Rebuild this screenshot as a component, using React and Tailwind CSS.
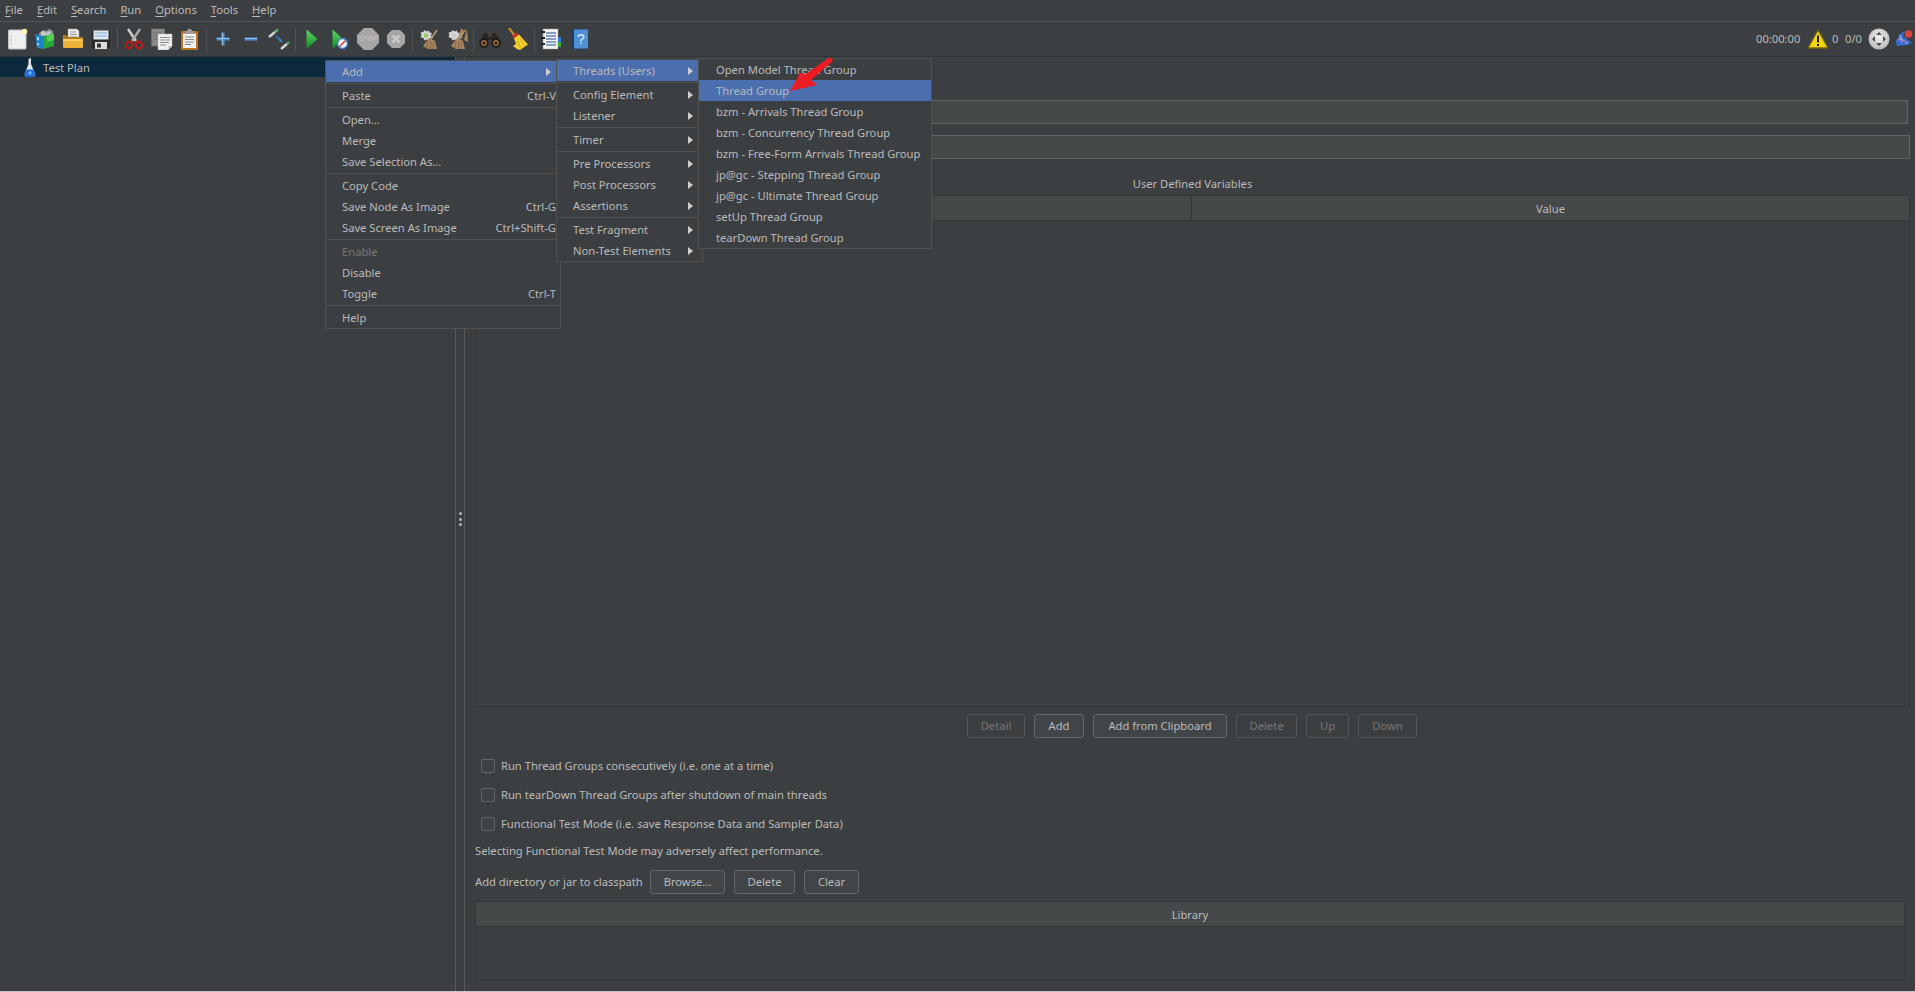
const menuFont = { fontFamily: '"Noto Sans", sans-serif' };

function IconNew() {
  return (
    <svg width="22" height="22" viewBox="0 0 22 22">
      <rect x="2.5" y="2" width="17.5" height="19" rx="1" fill="#efefef" stroke="#c4c4c4" />
      <circle cx="18.5" cy="3.5" r="2.8" fill="#fff3a0" />
      <circle cx="18.5" cy="3.5" r="1.4" fill="#fffde8" />
      <circle cx="5" cy="8" r="0.7" fill="#999" />
      <circle cx="5" cy="12" r="0.7" fill="#999" />
      <circle cx="5" cy="16" r="0.7" fill="#999" />
    </svg>
  );
}

function IconTemplates() {
  return (
    <svg width="22" height="22" viewBox="0 0 22 22">
      <path d="M5 5l4-3 3 1 3-2 4 2v9H5z" fill="#8e9599" />
      <path d="M7 4l3-1 2 2 4-2 1 6H7z" fill="#c3c9cc" />
      <path d="M1 6l8 2v13l-6-1z" fill="#1f7fc9" />
      <path d="M3 9l2 .5v3l-2-.5zM3 15l2 .5v2l-2-.5z" fill="#a9dcf5" />
      <path d="M9 8l11-2v12l-11 3z" fill="#25a83a" />
      <path d="M13 7.500l7-1.500v6l-7 2z" fill="#56d04f" />
    </svg>
  );
}

function IconOpen() {
  return (
    <svg width="22" height="22" viewBox="0 0 22 22">
      <path d="M6 1h9l2 2v9H6z" fill="#e8e8e8" stroke="#aaa" strokeWidth="0.5" />
      <path d="M8 4h6M8 6.500h7M8 9h7" stroke="#999" />
      <path d="M1 7h3l1 2h16v10l-1 1H2l-1-1z" fill="#b07a14" />
      <path d="M1 11h20v8l-1 1H2l-1-1z" fill="#eeb338" />
      <path d="M1 11h20v2H1z" fill="#f8cf68" />
    </svg>
  );
}

function IconSave() {
  return (
    <svg width="22" height="22" viewBox="0 0 22 22">
      <path d="M1 3l1-1h19v18l-1 1H2l-1-1z" fill="#2c2c2c" stroke="#555" strokeWidth="0.5" />
      <rect x="3.500" y="2.500" width="15" height="9" fill="#dce8f3" />
      <path d="M5 5h12M5 8h12" stroke="#7fa7cf" />
      <rect x="5" y="14" width="12" height="7" fill="#dcdcdc" />
      <rect x="7" y="15.500" width="4" height="4" fill="#333" />
    </svg>
  );
}

function IconCut() {
  return (
    <svg width="22" height="22" viewBox="0 0 22 22">
      <path d="M5 1l8 12" stroke="#cfcfcf" strokeWidth="2.400" />
      <path d="M17 1L9 13" stroke="#a8a8a8" strokeWidth="2.400" />
      <circle cx="6" cy="17" r="3.300" fill="none" stroke="#c81818" strokeWidth="1.800" />
      <circle cx="16" cy="17" r="3.300" fill="none" stroke="#c81818" strokeWidth="1.800" />
      <path d="M9 13l-1 2M13 13l1 2" stroke="#c81818" strokeWidth="2" />
    </svg>
  );
}

function IconCopy() {
  return (
    <svg width="22" height="22" viewBox="0 0 22 22">
      <rect x="0.500" y="1" width="13" height="17" fill="#8a8a8a" stroke="#777" strokeWidth="0.5" />
      <path d="M2 5h9M2 8h9M2 11h9" stroke="#6f6f6f" />
      <path d="M7 6h14v12l-4 4H7z" fill="#f0f0f0" stroke="#bbb" strokeWidth="0.5" />
      <path d="M9 9.500h10M9 12h10M9 14.500h9M9 17h6" stroke="#8c8c8c" />
      <path d="M21 18h-4v4z" fill="#c9c9c9" />
    </svg>
  );
}

function IconPaste() {
  return (
    <svg width="22" height="22" viewBox="0 0 22 22">
      <rect x="2" y="3" width="17" height="19" rx="1" fill="#b9731e" />
      <rect x="4" y="5.500" width="13" height="14.500" fill="#f1f1f1" />
      <path d="M6 9h9M6 11.500h9M6 14h9M6 16.500h6" stroke="#888" />
      <path d="M6 3h2l1-2h3l1 2h2v3H6z" fill="#9c9c9c" />
    </svg>
  );
}

function IconPlus() {
  return (
    <svg width="22" height="22" viewBox="0 0 22 22">
      <path d="M4.500 11h13M11 4.500v13" stroke="#4e8ccb" strokeWidth="3.200" />
      <path d="M5 10.500h12M10.500 5v12" stroke="#a9d2f3" strokeWidth="0.8" />
    </svg>
  );
}

function IconMinus() {
  return (
    <svg width="22" height="22" viewBox="0 0 22 22">
      <path d="M4.500 11h13" stroke="#4e8ccb" strokeWidth="3.200" />
      <path d="M5 10.500h12" stroke="#a9d2f3" strokeWidth="0.8" />
    </svg>
  );
}

function IconToggle() {
  return (
    <svg width="22" height="22" viewBox="0 0 22 22">
      <path d="M1 9l6-5" stroke="#cfd6d6" strokeWidth="2.400" />
      <path d="M7 4l3-2.500" stroke="#5fae6e" strokeWidth="2.400" />
      <path d="M8 8l5 5" stroke="#2f7fd8" strokeWidth="1.600" />
      <path d="M14.500 14.500l-1-4-3 3z" fill="#2f7fd8" />
      <path d="M13 21l6-5" stroke="#cfd6d6" strokeWidth="2.400" />
      <path d="M19 16l2-2" stroke="#5fae6e" strokeWidth="2.400" />
    </svg>
  );
}

function IconStart() {
  return (
    <svg width="22" height="22" viewBox="0 0 22 22">
      <defs>
        <linearGradient id="startFill" x1="0" y1="0" x2="0" y2="1">
          <stop offset="0" stopColor="#66d66a" />
          <stop offset="1" stopColor="#088a20" />
        </linearGradient>
      </defs>
      <path d="M5.500 1.500L16.500 11 5.500 21z" fill="url(#startFill)" />
    </svg>
  );
}

function IconStartNoTimers() {
  return (
    <svg width="22" height="22" viewBox="0 0 22 22">
      <defs>
        <linearGradient id="startFill2" x1="0" y1="0" x2="0" y2="1">
          <stop offset="0" stopColor="#66d66a" />
          <stop offset="1" stopColor="#088a20" />
        </linearGradient>
      </defs>
      <path d="M3.500 1.500L14 11 3.500 21z" fill="url(#startFill2)" />
      <circle cx="13.500" cy="15.500" r="5" fill="#f2f6fb" stroke="#3f7fd0" strokeWidth="1.500" />
      <path d="M10.500 18.500l6-6" stroke="#d22a2a" strokeWidth="1.300" />
    </svg>
  );
}

function IconStop() {
  return (
    <svg width="22" height="22" viewBox="0 0 22 22">
      <path d="M7 0h8l7 7v8l-7 7H7l-7-7V7z" fill="#a6a6a6" />
      <text x="11" y="13.300" textAnchor="middle" fontSize="6.500" fontWeight="700" fill="#bdbdbd" fontFamily="Liberation Sans, sans-serif">STOP</text>
    </svg>
  );
}

function IconShutdown() {
  return (
    <svg width="22" height="22" viewBox="0 0 22 22">
      <path d="M7 2h8l5 5v8l-5 5H7l-5-5V7z" fill="#a6a6a6" />
      <path d="M7.500 7.500l7 7M14.500 7.500l-7 7" stroke="#c8c8c8" strokeWidth="2.600" />
    </svg>
  );
}

function IconClear({ double }) {
  return (
    <svg width="22" height="22" viewBox="0 0 22 22">
      <path d="M7 2l1.500 1.500L11 2.500l.5 2L14 5l-1 2.500 1 2-2.500.8-.5 2.200-2.500-1-2 1-1-2.300L2.500 9l1-2-1-2.500 2.500-.5z" fill="#d6d6d6" />
      <circle cx="8" cy="7.500" r="2.200" fill={double ? "#c9c9c9" : "#8fd14f"} />
      {double && <path d="M15 1l-3 9 4 1 1-10z" fill="#a88660" />}
      <path d="M19 2l-6 9" stroke="#b89a72" strokeWidth="1.600" />
      <path d="M11 10l6 3 2 8-9 0-5-3z" fill="#a88660" />
      <path d="M10 13l-1 7M13 13l-1 8M15.500 14l-.5 7" stroke="#7a5c3a" strokeWidth="0.7" />
      {double && <path d="M21 1l-3 11 4 2z" fill="#a88660" />}
    </svg>
  );
}

function IconBinoculars() {
  return (
    <svg width="22" height="22" viewBox="0 0 22 22">
      <path d="M5 5h4v4h4V5h4l2 4 3 6H13v-3H9v3H0l3-6z" fill="#2b2622" />
      <circle cx="5" cy="15" r="4.800" fill="#1c1916" />
      <circle cx="17" cy="15" r="4.800" fill="#1c1916" />
      <circle cx="5" cy="15" r="3" fill="#9a6d3e" />
      <circle cx="17" cy="15" r="3" fill="#9a6d3e" />
      <circle cx="5" cy="15" r="1.500" fill="#2a1c10" />
      <circle cx="17" cy="15" r="1.500" fill="#2a1c10" />
    </svg>
  );
}

function IconBroom() {
  return (
    <svg width="22" height="22" viewBox="0 0 22 22">
      <path d="M2 0l6 8" stroke="#c98a22" strokeWidth="2.200" />
      <path d="M5 8l5-3.500 2 2.500-5 4z" fill="#c92b2b" />
      <path d="M7 10.500l5-4 9 10-8 5.500-3-1-4-3 3-2z" fill="#f2cf2f" />
      <path d="M10 12l4 9M13 10l5 9" stroke="#caa318" strokeWidth="0.7" />
    </svg>
  );
}

function IconList() {
  return (
    <svg width="22" height="22" viewBox="0 0 22 22">
      <rect x="3" y="1" width="15" height="20" fill="#f2f2f2" stroke="#999" strokeWidth="0.5" />
      <path d="M6 5h10M6 8h10M6 11h10M6 14h10M6 17h10" stroke="#1f4f96" />
      <path d="M1 4h4M1 10h4M1 16h4" stroke="#222" strokeWidth="1.800" />
      <rect x="18" y="9" width="3" height="5" fill="#2f7fd8" />
      <rect x="18" y="14" width="3" height="5" fill="#3aa83a" />
    </svg>
  );
}

function IconHelp() {
  return (
    <svg width="22" height="22" viewBox="0 0 22 22">
      <path d="M3 2l3-1h14v20H6l-3-1z" fill="#1f3f66" />
      <rect x="6" y="1.500" width="14" height="19" fill="#4f8fd6" />
      <text x="13" y="16" textAnchor="middle" fontSize="14" fill="#eaf3ff" fontFamily="Liberation Sans, sans-serif">?</text>
    </svg>
  );
}

function IconWarning() {
  return (
    <svg width="22" height="20" viewBox="0 0 22 20">
      <path d="M11 1l10 18H1z" fill="#f5d60a" stroke="#6f6410" strokeWidth="1.300" strokeLinejoin="round" />
      <path d="M11 6.500v7" stroke="#1d1a05" strokeWidth="2" />
      <rect x="10" y="15" width="2" height="2" fill="#1d1a05" />
    </svg>
  );
}

function IconRing() {
  return (
    <svg width="22" height="22" viewBox="0 0 22 22">
      <defs>
        <radialGradient id="ringFill" cx="0.5" cy="0.4" r="0.6">
          <stop offset="0" stopColor="#f5f5f5" />
          <stop offset="1" stopColor="#b8b8b8" />
        </radialGradient>
      </defs>
      <circle cx="11" cy="11" r="10.500" fill="url(#ringFill)" />
      <path d="M11 4l3 3H8zM11 18l3-3H8zM4 11l3-3v6zM18 11l-3-3v6z" fill="#4d4d4d" />
    </svg>
  );
}

function IconRemote() {
  return (
    <svg width="18" height="18" viewBox="0 0 18 18">
      <path d="M1 11l4-7 5-3-2 5 9 7-6 2-9 1z" fill="#3a6fd8" />
      <path d="M3 9l5 1 5 4M5 5l2 7" stroke="#b9d0f5" strokeWidth="0.9" fill="none" />
      <path d="M3 9l8 3" stroke="#d8506a" strokeWidth="0.8" />
      <circle cx="13.500" cy="4" r="3.800" fill="#d8433f" />
    </svg>
  );
}

function IconFlask() {
  return (
    <svg width="12" height="19" viewBox="0 0 12 19">
      <path d="M4.500 1L7 0v6l4.500 10.500L10 19H2L.5 16.500 4.500 6z" fill="#dfe6ee" />
      <path d="M2.800 11.500h6.400l2.300 5L10 19H2L.5 16.500z" fill="#1f6fd6" />
      <circle cx="6" cy="15" r="1.800" fill="#6db0f5" />
    </svg>
  );
}

const toolbarGroups = [
  [IconNew, IconTemplates, IconOpen, IconSave],
  [IconCut, IconCopy, IconPaste],
  [IconPlus, IconMinus, IconToggle],
  [IconStart, IconStartNoTimers, IconStop, IconShutdown],
  [IconClear, () => <IconClear double />],
  [IconBinoculars, IconBroom],
  [IconList, IconHelp],
];

const menuBarItems = ["File", "Edit", "Search", "Run", "Options", "Tools", "Help"];

const contextMenu = [
  [{ label: "Add", arrow: true, active: true }],
  [{ label: "Paste", shortcut: "Ctrl-V" }],
  [{ label: "Open..." }, { label: "Merge" }, { label: "Save Selection As..." }],
  [
    { label: "Copy Code" },
    { label: "Save Node As Image", shortcut: "Ctrl-G" },
    { label: "Save Screen As Image", shortcut: "Ctrl+Shift-G" },
  ],
  [{ label: "Enable", disabled: true }, { label: "Disable" }, { label: "Toggle", shortcut: "Ctrl-T" }],
  [{ label: "Help" }],
];

const addMenu = [
  [{ label: "Threads (Users)", arrow: true, active: true }],
  [{ label: "Config Element", arrow: true }, { label: "Listener", arrow: true }],
  [{ label: "Timer", arrow: true }],
  [
    { label: "Pre Processors", arrow: true },
    { label: "Post Processors", arrow: true },
    { label: "Assertions", arrow: true },
  ],
  [{ label: "Test Fragment", arrow: true }, { label: "Non-Test Elements", arrow: true }],
];

const threadMenu = [
  [
    { label: "Open Model Thread Group" },
    { label: "Thread Group", active: true },
    { label: "bzm - Arrivals Thread Group" },
    { label: "bzm - Concurrency Thread Group" },
    { label: "bzm - Free-Form Arrivals Thread Group" },
    { label: "jp@gc - Stepping Thread Group" },
    { label: "jp@gc - Ultimate Thread Group" },
    { label: "setUp Thread Group" },
    { label: "tearDown Thread Group" },
  ],
];

function PopupMenu({ groups, className, indent }) {
  return (
    <div className={`absolute border border-[#515151] bg-[#3c3f41] ${className}`}>
      {groups.map((group, i) => (
        <div key={i}>
          {i > 0 && (
            <div className="flex h-[3px] items-center">
              <div className="h-px w-full bg-[#515151]" />
            </div>
          )}
          {group.map((item) => (
            <div
              key={item.label}
              className={`flex h-[21px] items-center justify-between whitespace-nowrap ${indent} ${item.shortcut ? "pr-[4px]" : "pr-[9px]"} ${item.active ? "bg-[#4b6eaf]" : ""} ${item.disabled ? "text-[#777777]" : "text-[#bbbbbb]"}`}
            >
              <span className="pt-[1px]">{item.label}</span>
              {item.shortcut && <span className="pt-[1px]">{item.shortcut}</span>}
              {item.arrow && (
                <svg width="5" height="8" viewBox="0 0 5 8">
                  <path d="M0 0l5 4-5 4z" fill="#cfcfcf" />
                </svg>
              )}
            </div>
          ))}
        </div>
      ))}
    </div>
  );
}

function Button({ children, className, disabled }) {
  return (
    <div
      className={`flex h-[24px] items-center justify-center rounded-[3px] border ${className} ${disabled ? "border-[#555758] bg-[#3c3f41] text-[#777777]" : "border-[#646668] bg-[#414547] text-[#bbbbbb]"}`}
    >
      {children}
    </div>
  );
}

function CheckRow({ children }) {
  return (
    <div className="flex h-[14px] items-center gap-[6px] pl-[6px]">
      <div className="h-[14px] w-[14px] rounded-[2px] border border-[#646668] bg-[#3f4244]" />
      <span className="pt-[1px]">{children}</span>
    </div>
  );
}

export default function App() {
  return (
    <div
      className="relative flex h-[992px] w-[1915px] flex-col overflow-hidden bg-[#3c3f41] text-[11.2px] text-[#bbbbbb]"
      style={menuFont}
    >
      <div className="flex h-[22px] shrink-0 items-center gap-[14px] border-b border-[#515354] pl-[5px]">
        {menuBarItems.map((name) => (
          <span key={name}>
            <u className="underline-offset-2">{name[0]}</u>
            {name.slice(1)}
          </span>
        ))}
      </div>

      <div className="flex h-[35px] shrink-0 items-center border-b border-[#323537] pl-[3px]">
        {toolbarGroups.map((group, i) => (
          <div key={i} className="flex items-center">
            {i > 0 && (
              <div className="flex w-[5px] justify-center">
                <div className="h-[24px] w-px bg-[#515354]" />
              </div>
            )}
            {group.map((Icon, j) => (
              <div key={j} className="flex w-[28px] justify-center">
                <Icon />
              </div>
            ))}
          </div>
        ))}
        <div className="ml-auto flex items-center">
          <span className="w-[44px]">00:00:00</span>
          <div className="ml-[7px] w-[22px]">
            <IconWarning />
          </div>
          <span className="ml-[3px] w-[12px]">0</span>
          <span className="ml-[1px] w-[23px]">0/0</span>
          <IconRing />
          <div className="ml-[5px] mr-[2px] flex w-[18px]">
            <IconRemote />
          </div>
        </div>
      </div>

      <div className="flex min-h-0 flex-1">
        <div className="w-[455px] shrink-0">
          <div className="flex h-[20px] items-center bg-[#0d293e] pl-[24px]">
            <IconFlask />
            <span className="ml-[7px] pt-[2px]">Test Plan</span>
          </div>
        </div>

        <div className="flex w-[10px] shrink-0 items-center justify-center border-x border-[#585a5c] pb-[10px]">
          <div className="flex flex-col gap-[2.500px]">
            <div className="h-[3px] w-[3px] rounded-full bg-[#b5b5b5]" />
            <div className="h-[3px] w-[3px] rounded-full bg-[#b5b5b5]" />
            <div className="h-[3px] w-[3px] rounded-full bg-[#b5b5b5]" />
          </div>
        </div>

        <div className="flex min-w-0 flex-1 flex-col pl-[10px] pr-[5px] pt-[43px]">
          <div className="mb-[11px] mr-[2px] ml-[60px] h-[24px] border border-[#646464] bg-[#45494a]" />
          <div className="ml-[60px] h-[24px] border border-[#646464] bg-[#45494a]" />
          <div className="mt-[17px] mb-[3px] h-[16px] text-center leading-[16px]">User Defined Variables</div>

          <div className="flex h-[512px] shrink-0 flex-col border border-[#323538]">
            <div className="flex h-[25px] border-b border-[#323538] bg-[#45494a]">
              <div className="flex w-[716px] items-center justify-center border-r border-[#323538] pt-[3px]">Name:</div>
              <div className="flex flex-1 items-center justify-center pt-[3px]">Value</div>
            </div>
          </div>

          <div className="mt-[7px] flex justify-center gap-[9px] pr-[1px]">
            <Button disabled className="w-[58px]">Detail</Button>
            <Button className="w-[50px]">Add</Button>
            <Button className="w-[134px]">Add from Clipboard</Button>
            <Button disabled className="w-[61px]">Delete</Button>
            <Button disabled className="w-[43px]">Up</Button>
            <Button disabled className="w-[59px]">Down</Button>
          </div>

          <div className="mt-[21px] flex flex-col gap-[15px]">
            <CheckRow>Run Thread Groups consecutively (i.e. one at a time)</CheckRow>
            <CheckRow>Run tearDown Thread Groups after shutdown of main threads</CheckRow>
            <CheckRow>Functional Test Mode (i.e. save Response Data and Sampler Data)</CheckRow>
          </div>

          <div className="mt-[12px] h-[16px] leading-[16px]">Selecting Functional Test Mode may adversely affect performance.</div>

          <div className="mt-[11px] flex items-center">
            <span className="w-[175px] whitespace-nowrap">Add directory or jar to classpath</span>
            <Button className="w-[75px]">Browse...</Button>
            <Button className="ml-[9px] w-[61px]">Delete</Button>
            <Button className="ml-[9px] w-[55px]">Clear</Button>
          </div>

          <div className="mt-[7px] mr-[5px] h-[80px] border border-[#323538]">
            <div className="flex h-[25px] items-center justify-center border-b border-[#323538] bg-[#45494a] pt-[2px]">Library</div>
          </div>
        </div>
      </div>

      <div className="h-px shrink-0 bg-[#c8c4c8]" />

      <PopupMenu groups={contextMenu} indent="pl-[16px]" className="left-[325px] top-[60px] w-[236px]" />
      <PopupMenu groups={addMenu} indent="pl-[16px]" className="left-[556px] top-[59px] w-[147px]" />
      <PopupMenu groups={threadMenu} indent="pl-[17px]" className="left-[698px] top-[58px] w-[234px]" />

      <svg className="absolute left-[785px] top-[55px]" width="52" height="40" viewBox="0 0 52 40">
        <path d="M5 36l10-18 6 1 24-17 3 4-22 19 6 5z" fill="#ed1c24" />
      </svg>
    </div>
  );
}
